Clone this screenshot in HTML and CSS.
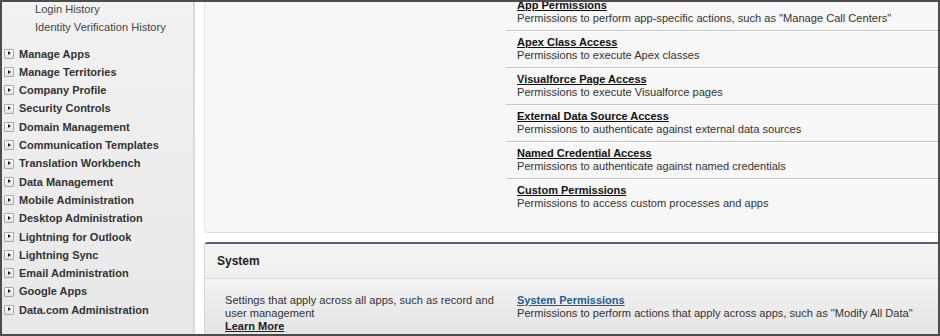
FILE: index.html
```html
<!DOCTYPE html>
<html lang="en">
<head>
  <meta charset="UTF-8" />
  <title>Setup - Permission Sets</title>
  <link rel="stylesheet" href="styles.css">
</head>
<body>
  <div class="frame">
    <div class="sidebar">
      <ul class="sub-list">
        <li>Login History</li>
        <li>Identity Verification History</li>
      </ul>
      <ul class="nav-list">
        <li><span class="toggle"></span>Manage Apps</li>
        <li><span class="toggle"></span>Manage Territories</li>
        <li><span class="toggle"></span>Company Profile</li>
        <li><span class="toggle"></span>Security Controls</li>
        <li><span class="toggle"></span>Domain Management</li>
        <li><span class="toggle"></span>Communication Templates</li>
        <li><span class="toggle"></span>Translation Workbench</li>
        <li><span class="toggle"></span>Data Management</li>
        <li><span class="toggle"></span>Mobile Administration</li>
        <li><span class="toggle"></span>Desktop Administration</li>
        <li><span class="toggle"></span>Lightning for Outlook</li>
        <li><span class="toggle"></span>Lightning Sync</li>
        <li><span class="toggle"></span>Email Administration</li>
        <li><span class="toggle"></span>Google Apps</li>
        <li><span class="toggle"></span>Data.com Administration</li>
      </ul>
    </div>
    <div class="main">
      <div class="panel">
        <div class="panel-left"></div>
        <div class="perm-list">
          <div class="perm-row">
            <a class="perm-link">App Permissions</a>
            <p>Permissions to perform app-specific actions, such as "Manage Call Centers"</p>
          </div>
          <div class="perm-row">
            <a class="perm-link">Apex Class Access</a>
            <p>Permissions to execute Apex classes</p>
          </div>
          <div class="perm-row">
            <a class="perm-link">Visualforce Page Access</a>
            <p>Permissions to execute Visualforce pages</p>
          </div>
          <div class="perm-row">
            <a class="perm-link">External Data Source Access</a>
            <p>Permissions to authenticate against external data sources</p>
          </div>
          <div class="perm-row">
            <a class="perm-link">Named Credential Access</a>
            <p>Permissions to authenticate against named credentials</p>
          </div>
          <div class="perm-row">
            <a class="perm-link">Custom Permissions</a>
            <p>Permissions to access custom processes and apps</p>
          </div>
        </div>
      </div>
      <div class="system">
        <div class="system-head">System</div>
        <div class="system-body">
          <div class="system-info">
            <p>Settings that apply across all apps, such as record and user management</p>
            <a class="learn-more">Learn More</a>
          </div>
          <div class="system-perms">
            <a class="perm-link blue">System Permissions</a>
            <p>Permissions to perform actions that apply across apps, such as "Modify All Data"</p>
          </div>
        </div>
      </div>
    </div>
  </div>
</body>
</html>
```

FILE: styles.css
```css
body {
  margin: 0;
  background: #fff;
  font-family: 'Liberation Sans', Arial, sans-serif;
  font-size: 11.1px;
  color: #333;
}
.frame {
  width: 940px;
  height: 336px;
  box-sizing: border-box;
  border: 2px solid #4d4d4d;
  display: flex;
  overflow: hidden;
}
.sidebar {
  width: 191px;
  flex-shrink: 0;
  background: linear-gradient(#f2f2f2, #e8e8e8);
  border-right: 2px solid #dadada;
}
.sidebar ul {
  list-style: none;
  margin: 0;
  padding: 0;
}
.sub-list {
  margin-top: -2px !important;
  margin-bottom: 8px !important;
  padding-left: 33px !important;
}
.sub-list li {
  line-height: 18.3px;
  color: #444;
}
.nav-list {
  padding-left: 2px !important;
}
.nav-list li {
  line-height: 18.3px;
  font-size: 11px;
  font-weight: bold;
  color: #333;
  display: flex;
  align-items: center;
  white-space: nowrap;
}
.toggle {
  width: 8px;
  height: 8px;
  border: 1px solid #a8a8a8;
  border-radius: 1px;
  background: linear-gradient(#fff, #e4e4e4);
  margin-right: 5px;
  position: relative;
  flex-shrink: 0;
}
.toggle::after {
  content: "";
  position: absolute;
  left: 3px;
  top: 1.5px;
  border-left: 3px solid #222;
  border-top: 2.5px solid transparent;
  border-bottom: 2.5px solid transparent;
}
.main {
  flex: 1;
  padding-left: 9px;
  background: #fff;
  display: flex;
  flex-direction: column;
}
.panel {
  display: flex;
  background: #f7f7f7;
  border-left: 1px solid #e4e4e4;
  border-bottom: 1px solid #dcdcdc;
  border-bottom-left-radius: 4px;
  padding-bottom: 17px;
}
.panel-left {
  width: 301px;
  flex-shrink: 0;
}
.perm-list {
  flex: 1;
  margin-top: -8px;
}
.perm-row {
  padding: 4px 0 5px 11px;
  border-bottom: 1px solid #c4c4c4;
  box-shadow: 0 1px 0 #fff;
}
.perm-row:last-child {
  border-bottom: none;
  box-shadow: none;
}
.perm-link {
  display: block;
  line-height: 14px;
  font-size: 11px;
  font-weight: bold;
  color: #111;
  text-decoration: underline;
}
.perm-link.blue {
  color: #245b94;
}
.perm-row p, .system-body p {
  margin: 0;
  line-height: 13px;
  color: #333;
}
.system {
  margin-top: 9px;
  flex: 1;
  border-top: 2px solid #56657a;
  border-left: 1px solid #d4d4d4;
  border-top-left-radius: 4px;
  display: flex;
  flex-direction: column;
}
.system-head {
  height: 34px;
  line-height: 34px;
  padding-left: 12px;
  font-weight: bold;
  font-size: 12px;
  color: #222;
  background: linear-gradient(#f4f4f4, #efefef);
  border-bottom: 1px solid #d8d8d8;
  box-shadow: 0 1px 0 #fafafa;
}
.system-body {
  flex: 1;
  display: flex;
  padding-top: 15px;
  background: linear-gradient(#f3f3f3, #e4e4e4);
}
.system-info {
  width: 280px;
  padding-left: 20px;
  flex-shrink: 0;
}
.learn-more {
  display: block;
  line-height: 13px;
  font-size: 11px;
  font-weight: bold;
  color: #222;
  text-decoration: underline;
}
.system-perms {
  flex: 1;
  padding-left: 12px;
  margin-top: -1px;
}
```
